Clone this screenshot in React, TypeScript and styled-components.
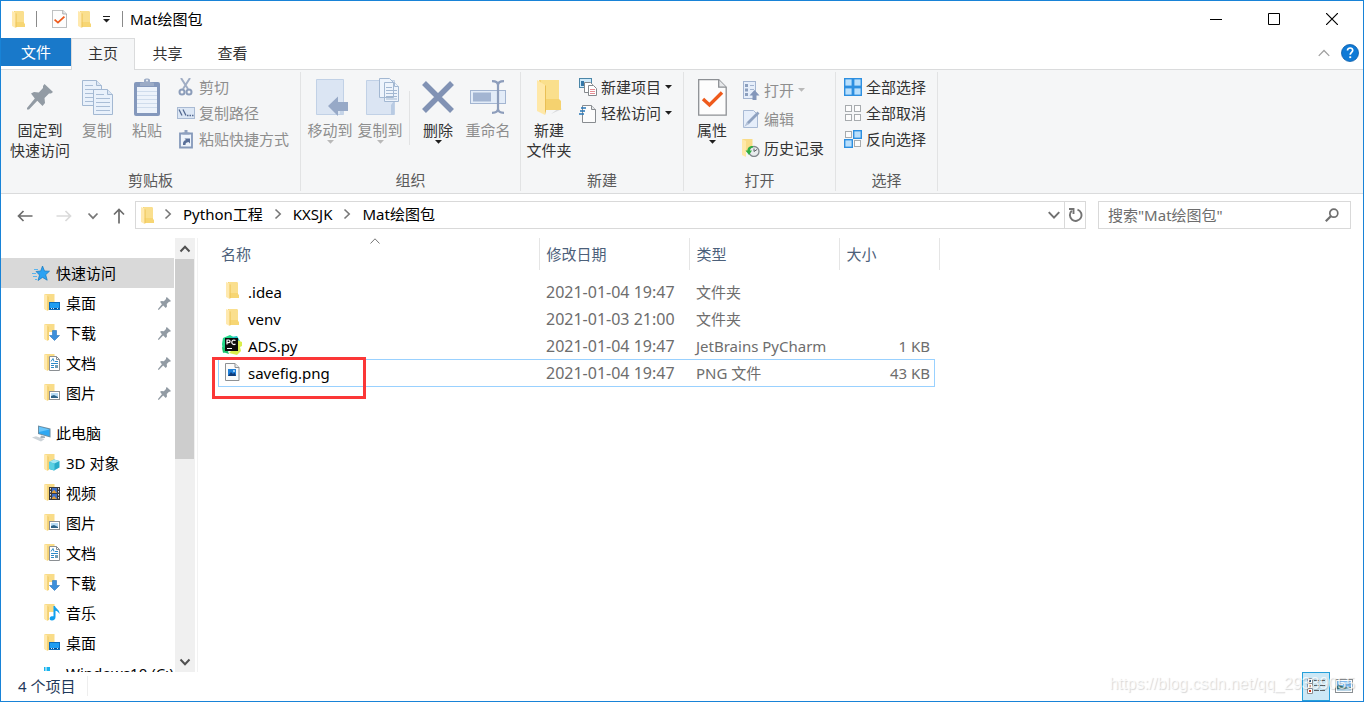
import React from 'react';
import styled, { createGlobalStyle } from 'styled-components';

const GlobalStyle = createGlobalStyle`
  * { box-sizing: border-box; }
  body {
    margin: 0;
    background: #fff;
    font-family: 'Noto Sans', 'Noto Sans CJK SC', sans-serif;
    font-size: 15px;
    line-height: 20px;
    color: #000;
  }
  button {
    font: inherit;
    color: inherit;
    background: none;
    border: 0;
    padding: 0;
    margin: 0;
    cursor: default;
  }
  svg { display: block; flex: none; }
`;

/* ---------- icons ---------- */

const FolderShape = () => (
  <>
    <path d="M2 0h8.6l1.4 1v11l1 1v3H3z" fill="#f7d674" />
    <path d="M3 0h7.6l1.4 1v10H3z" fill="#fadf8e" />
    <path d="M0 0l3.6 1.6V17L0 15z" fill="#ffe9ae" />
    <path d="M3.6 1.6V17l1-1V3z" fill="#eec65c" />
  </>
);

const FolderIcon = () => (
  <svg width="13" height="17" viewBox="0 0 13 17"><FolderShape /></svg>
);

type NavKind = 'desktop' | 'download' | 'document' | 'picture' | 'cube' | 'video' | 'music';

const overlays: Record<NavKind, React.ReactNode> = {
  desktop: (
    <>
      <rect x="5.5" y="8.5" width="10" height="7" fill="#1e9df1" stroke="#0a6cbc" />
      <path d="M6 14.5h9" stroke="#0b4f8c" />
      <path d="M7 14.5h1M9 14.5h1M13 14.5h1" stroke="#cbe9ff" />
    </>
  ),
  download: (
    <path d="M8.5 6.5h4v5h3L10.500 16.500 5.500 11.500h3z" fill="#3c8fdb" stroke="#2a73bb" strokeWidth=".6" />
  ),
  document: (
    <>
      <path d="M5.500 2.500h7l3 3v11h-10z" fill="#fff" stroke="#8b8f93" />
      <path d="M12.500 2.500v3h3" fill="none" stroke="#8b8f93" />
      <path d="M7 7.500l2-3 1 3M7 9.500h7M7 11.500h3M7 13.500h3M11 7.500h3" stroke="#2c8ac9" fill="none" />
      <rect x="11" y="11" width="3" height="3" fill="#6f9db5" />
    </>
  ),
  picture: (
    <>
      <rect x="5.500" y="7.500" width="10" height="8" fill="#fff" stroke="#8b8f93" />
      <rect x="7" y="9" width="7" height="5" fill="#b6daf4" />
      <path d="M7 14v-2l3-1 4 2v1z" fill="#2c6186" />
    </>
  ),
  cube: (
    <>
      <path d="M5 8l5-2.500L15.500 7v6.500L10 16.500 5 15z" fill="#29abc9" />
      <path d="M5 8l5-2.500L15.500 7 10.500 9.500z" fill="#a5e8f3" />
      <path d="M5 8l5.500 1.500v7L5 15z" fill="#5bd0e2" />
    </>
  ),
  video: (
    <>
      <rect x="5" y="3" width="11" height="13" fill="#3a3a3d" />
      <path d="M6.500 4v12M14.500 4v12" stroke="#e4e4e4" strokeDasharray="1.500 1.500" />
      <rect x="8" y="4" width="5" height="5" fill="#3f6fc6" />
      <rect x="8" y="10" width="5" height="5" fill="#3f6fc6" />
      <path d="M8 8l2-2 3 3H8zM8 14l2-2 3 3H8z" fill="#e2a03b" />
    </>
  ),
  music: (
    <path d="M9.500 2h1.500c.5 2.500 5 4 4.500 8-1-2-2.500-3-4-3.200V13c0 2-1.500 3.500-3.500 3.500S5.300 15 5.800 13.700 8 12 9.500 12.300z" fill="#12a0ee" />
  ),
};

const NavFolderIcon = ({ kind }: { kind: NavKind }) => (
  <svg width="17" height="18" viewBox="0 0 17 18">
    <path d="M1 0h9.500v8H5v8H1z" fill="#f9dc88" />
    <path d="M0 0l3.500 1.500V17L0 15z" fill="#ffe9ae" />
    <path d="M3.500 1.500V17l1-1V3z" fill="#eec65c" />
    {overlays[kind]}
  </svg>
);

const StarIcon = () => (
  <svg width="18" height="17" viewBox="0 0 18 17">
    <path d="M10.500 1l2 5 5 .2-3.800 3.500 1.500 5.500-4.700-2.800L6 15.500l1.500-5.500L4 6.500l4.700-.5z" fill="#2ba2f3" stroke="#1577bd" strokeWidth=".7" />
    <path d="M2 4.500h4M0 8.500h4M1 11.500h4M3 14.500h2" stroke="#5ab4ee" />
  </svg>
);

const ComputerIcon = () => (
  <svg width="19" height="17" viewBox="0 0 19 17">
    <path d="M6 .500l12.500 3v9L6 9z" fill="#6c8ea3" />
    <path d="M7 1.800l10.500 2.600v6.800L7 8.200z" fill="#2ea8f2" />
    <path d="M7 1.800l10.500 2.600L7 7z" fill="#6ac6fa" />
    <path d="M9 10.500l4 1v1.500l-5 .5z" fill="#a3b1ba" />
    <path d="M0 12.500l4-1.200 8.500 3L9 16.500z" fill="#ccd3d8" />
  </svg>
);

const WindowsDriveIcon = () => (
  <svg width="17" height="18" viewBox="0 0 17 18">
    <path d="M-2 3h3.500v4H-2zM2.500 3H6v4H2.500z" fill="#19b3ee" />
    <rect x="0" y="10" width="15" height="5" fill="#9aa4ab" />
  </svg>
);

const PushPin = ({ size }: { size: number }) => (
  <svg width={size} height={size} viewBox="0 0 26 26">
    <path d="M17.500 0L26 8l-2 1.500h-2L17.500 14l.5 5-2.500 3-5.200-5.200L2 25.500H0V24l7.800-9.600L4 9.500 7 8l4.800.5L16 4V2z" fill="#929ba4" />
  </svg>
);

const PropertiesIcon = ({ width, height }: { width: number; height: number }) => (
  <svg width={width} height={height} viewBox="0 0 29 37" preserveAspectRatio="none">
    <path d="M.7.700h20l7.500 7.500v28H.7z" fill="#fdfdfd" stroke="#8d9094" strokeWidth="1.300" />
    <path d="M20.700.700v7.500h7.500" fill="#e7e9eb" stroke="#8d9094" strokeWidth="1.300" />
    <path d="M5 20l6.500 6L24 13.500" fill="none" stroke="#ee5a1c" strokeWidth="3.400" />
  </svg>
);

const Sheet = ({ x, y }: { x: number; y: number }) => (
  <g transform={`translate(${x} ${y})`}>
    <path d="M.500.500h14l5 5v20H.500z" fill="#e9f1fb" stroke="#a3b8d2" />
    <path d="M14.500.500v5h5" fill="#dbe6f4" stroke="#a3b8d2" />
    <path d="M3 5.500h8M3 9.500h14M3 13.500h14M3 17.500h14M3 21.500h14" stroke="#a9bdd6" />
  </g>
);

const CopyIcon = () => (
  <svg width="31" height="37" viewBox="0 0 31 37"><Sheet x={0} y={1} /><Sheet x={11} y={10} /></svg>
);

const PasteIcon = () => (
  <svg width="27" height="38" viewBox="0 0 27 38">
    <rect x="0" y="4" width="26" height="34" rx="2" fill="#8498bc" />
    <path d="M3 9h20v26H3z" fill="#edf3fb" />
    <path d="M3 13.500h20M3 17.500h20M3 21.500h20M3 25.500h20M3 29.500h20" stroke="#cfdcec" />
    <path d="M6 8V5l4-1V2c0-2 6-2 6 0v2l4 1v3z" fill="#9babc6" />
    <circle cx="13" cy="2.500" r="1" fill="#eef2f8" />
  </svg>
);

const CutIcon = () => (
  <svg width="16" height="18" viewBox="0 0 16 18">
    <path d="M3 0l7 11M12 0L5 11" stroke="#a0adc4" strokeWidth="2" fill="none" />
    <circle cx="4" cy="14" r="2.500" fill="none" stroke="#8c9dba" strokeWidth="2" />
    <circle cx="11" cy="14" r="2.500" fill="none" stroke="#8c9dba" strokeWidth="2" />
  </svg>
);

const CopyPathIcon = () => (
  <svg width="18" height="12" viewBox="0 0 18 12">
    <rect x=".500" y=".500" width="17" height="11" fill="#dce7f5" stroke="#a9bad3" />
    <path d="M2 2.500l3 6M6 2.500l3 6M10 8.500h1.500M12.500 8.500H14M15 8.500h1.500" stroke="#536991" strokeWidth="1.300" />
  </svg>
);

const PasteShortcutIcon = () => (
  <svg width="15" height="19" viewBox="0 0 15 19">
    <path d="M1 3.500h12v14H1z" fill="#eef4fb" stroke="#8599ba" strokeWidth="1.800" />
    <path d="M3.500 4.500V2.500h2V0h3v2.500h2v2z" fill="#8fa1bf" />
    <path d="M4 15c0-3.500.8-4.500 3-5L5.500 8.500h5.500v5l-1.500-1.500C7 12.500 6.500 13 6.500 15z" fill="#5a7099" />
  </svg>
);

const MoveToIcon = () => (
  <svg width="38" height="38" viewBox="-5 0 38 38">
    <path d="M.500 1.500h27v35H.500z" fill="#dbe5f3" stroke="#c1d1e6" />
    <path d="M24 24h4v12h-4z" fill="#c5d4e8" />
    <path d="M12 28l10-9.500V24h10v9H22v5z" fill="#97a9c7" />
  </svg>
);

const CopyToIcon = () => (
  <svg width="40" height="38" viewBox="-6 0 40 38">
    <path d="M.500 2.500h28v34H.500z" fill="#dbe5f3" stroke="#c1d1e6" />
    <path d="M25 27l3-4v14h-3z" fill="#b9cbe3" />
    <g strokeWidth="1" stroke="#a3b8d2" fill="#eef4fc">
      <path d="M13.500.500h10l4 4v15h-14zM18.500 4.500h10l4 4v15h-14z" />
      <path d="M28.500 4.500v4h4M20 9.500h6M20 12.500h11M20 15.500h11M20 18.500h11M20 21h11" />
    </g>
  </svg>
);

const DeleteIcon = () => (
  <svg width="32" height="32" viewBox="0 0 32 32">
    <path d="M2 2l28 28M30 2L2 30" stroke="#8192b4" strokeWidth="5.500" />
  </svg>
);

const RenameIcon = () => (
  <svg width="36" height="34" viewBox="0 0 36 34">
    <rect x=".500" y="10.500" width="35" height="13" fill="#e3ecf8" stroke="#a3b5d1" />
    <rect x="3" y="12.500" width="18" height="9" fill="#a3b5d2" />
    <path d="M22 1.200c4 0 6 1.500 6 4v23.600c0 2.500-2 4-6 4M34 1.200c-4 0-6 1.500-6 4v23.600c0 2.500 2 4 6 4" fill="none" stroke="#8d9dbb" strokeWidth="2.200" />
  </svg>
);

const NewFolderIcon = () => (
  <svg width="25" height="35" viewBox="0 0 25 35">
    <path d="M14 34l11-5-3-1z" fill="#d9dadc" />
    <path d="M2 0h20v19l2 2v9H4z" fill="#f5d26f" />
    <path d="M4 0h18v19H4z" fill="#fadf8c" />
    <path d="M0 0l8 5v30l-8-4z" fill="#ffe8a8" />
    <path d="M8 5v30l1-4V6z" fill="#e9bf55" />
  </svg>
);

const NewItemIcon = () => (
  <svg width="18" height="18" viewBox="0 0 18 18">
    <rect x=".500" y=".500" width="12" height="9" fill="#cfeafa" stroke="#4b86a8" />
    <path d="M2 8V3h3v5z" fill="#3478a8" />
    <path d="M5.500 4.500h6l2 2v8h-8z" fill="#fff" stroke="#85898d" />
    <path d="M9.500 7.500h5l3 3v7h-8z" fill="#fff" stroke="#85898d" />
    <path d="M11 11.500h5M11 13.500h5M11 15.500h5" stroke="#e58d93" />
  </svg>
);

const EasyAccessIcon = () => (
  <svg width="18" height="19" viewBox="0 0 18 19">
    <path d="M3.500 1.500h9l4 4v13h-13z" fill="#fcfcfc" stroke="#888c90" />
    <path d="M12.500 1.500v4h4" fill="#e5e7e9" stroke="#888c90" />
    <path d="M2 4h5M1 7h5M0 10h5" stroke="#2777b8" strokeWidth="1.400" />
  </svg>
);

const OpenIcon = () => (
  <svg width="17" height="19" viewBox="0 0 17 19">
    <rect x=".500" y=".500" width="12" height="17" fill="#e6eefa" stroke="#a3b4d0" />
    <path d="M2 3h3v3H2zM2 7.500h3v3H2zM2 12h3v3H2z" fill="#8c9fbe" />
    <path d="M7 4.500h4M7 8.500h4" stroke="#a3b4d0" />
    <path d="M11.500 9l5 5.500h-3V19h-4v-4.500h-3z" fill="#8396ba" />
  </svg>
);

const EditIcon = () => (
  <svg width="17" height="18" viewBox="0 0 17 18">
    <path d="M.500.500h10l4 4v13H.500z" fill="#e6eefa" stroke="#a9bad4" />
    <path d="M3 15l1-3L14.500 1.500l2 2L6 14z" fill="#8fa2c0" />
    <path d="M1 17l5-3-2-2z" fill="#b6c4da" />
  </svg>
);

const HistoryIcon = () => (
  <svg width="18" height="18" viewBox="0 0 18 18">
    <path d="M0 0h10.500v13H3z" fill="#f9dc88" />
    <path d="M0 0l4 2v16l-4-2z" fill="#ffe8a8" />
    <circle cx="12" cy="12.500" r="5" fill="#e9ecee" stroke="#82888d" strokeWidth="1.300" />
    <path d="M12 9.500v3l3-2" stroke="#5b6166" fill="none" />
    <path d="M11 7C7 7 5.500 9 5.500 11.500H3.500L7 16l3-4.500H8C8 9.500 9 8.500 11 8.500z" fill="#2fae43" />
  </svg>
);

const SelectionIcon = ({ picked }: { picked: boolean[] }) => (
  <svg width="18" height="18" viewBox="0 0 18 18">
    {picked.map((on, i) => {
      const x = (i % 2) * 9;
      const y = Math.floor(i / 2) * 9;
      return on
        ? <rect key={i} x={x + 0.7} y={y + 0.7} width="7.600" height="7.600" fill="#b9dffc" stroke="#2d8fe0" strokeWidth="1.400" />
        : <rect key={i} x={x + 1.5} y={y + 1.5} width="6" height="6" fill="#fcfcfc" stroke="#a7abae" />;
    })}
  </svg>
);

const ArrowIcon = ({ dir, color }: { dir: 'left' | 'right' | 'up'; color: string }) => {
  const turn = { left: 0, right: 180, up: 90 }[dir];
  return (
    <svg width="16" height="16" viewBox="0 0 16 16">
      <path d="M6.500 3L1.500 8l5 5M1.500 8H15.500" transform={`rotate(${turn} 8 8)`} fill="none" stroke={color} strokeWidth="1.700" />
    </svg>
  );
};

type ChevronProps = { dir: 'up' | 'down' | 'right'; w: number; color: string; weight: number };
const Chevron = ({ dir, w, color, weight }: ChevronProps) => {
  const turn = { down: 0, up: 180, right: -90 }[dir];
  return (
    <svg width={w} height={w} viewBox="0 0 12 12">
      <path d="M1.500 3.500L6 8.200l4.500-4.700" transform={`rotate(${turn} 6 6)`} fill="none" stroke={color} strokeWidth={weight} />
    </svg>
  );
};

const RefreshIcon = () => (
  <svg width="15" height="16" viewBox="0 0 15 16">
    <path d="M9.500 2.600A5.800 5.800 0 1 1 3.800 3.800" fill="none" stroke="#737373" strokeWidth="1.900" />
    <path d="M1 2h4.500v5" fill="none" stroke="#737373" strokeWidth="1.900" />
  </svg>
);

const SearchIcon = () => (
  <svg width="14" height="14" viewBox="0 0 14 14">
    <circle cx="8.800" cy="5.200" r="4" fill="none" stroke="#6f6f6f" strokeWidth="1.700" />
    <path d="M6 8L.800 13.200" stroke="#6f6f6f" strokeWidth="2.200" />
  </svg>
);

const PyCharmIcon = () => (
  <svg width="20" height="20" viewBox="0 0 20 20">
    <path d="M1 3l7-3 5 3-3 12-9 3-1-9z" fill="#21d789" />
    <path d="M9 2l6-1 3 5-3 3z" fill="#1fc8c4" />
    <path d="M15 5l5 2v4l-2 1 1 4-4 4-8-2 4-4z" fill="#d9ee4b" />
    <path d="M0 12l5 2 2 5-6-2z" fill="#1bc06c" />
    <rect x="3" y="3" width="13" height="13" fill="#0b0b0b" />
    <path d="M5 9.500V5h1.800c1.700 0 1.700 2.600 0 2.600H5M13.500 5.600c-1.800-1.200-3.700-.2-3.700 1.700s2 2.900 3.700 1.700M5 13.500h5" fill="none" stroke="#fff" strokeWidth="1.200" />
  </svg>
);

const ImageFileIcon = () => (
  <svg width="15" height="18" viewBox="0 0 15 18">
    <path d="M.500.500h9.500l4 4v13H.500z" fill="#fbfbfb" stroke="#8e9194" />
    <path d="M10 .500v4h4" fill="#e8e8e8" stroke="#8e9194" />
    <rect x="3" y="6" width="8" height="7" fill="#1f7fd8" />
    <path d="M3 13l3-4 2 2 1.500-1.500L11 13z" fill="#123c78" />
    <circle cx="9" cy="8" r="1" fill="#bfe3ff" />
  </svg>
);

const HelpIcon = () => (
  <svg width="18" height="18" viewBox="0 0 18 18">
    <circle cx="9" cy="9" r="8.500" fill="#0f7ad6" stroke="#0a5ca8" strokeWidth=".8" />
    <path d="M6.500 6.500c0-3.500 5.500-3.200 5.200 0-.2 1.800-2.500 2-2.500 4.200" fill="none" stroke="#fff" strokeWidth="1.700" />
    <path d="M8.300 12.300h1.900v1.800H8.300z" fill="#fff" />
  </svg>
);

const DetailsViewIcon = () => (
  <svg width="18" height="17" viewBox="0 0 18 17">
    <path d="M.500.500h5v5h-5zM.500 5.500h5v5h-5zM.500 10.500h5v5h-5z" fill="#fff" stroke="#8a8f93" />
    <path d="M2 3h2" stroke="#2c6186" strokeWidth="2" />
    <path d="M2 8h2" stroke="#dfa58b" strokeWidth="2" />
    <path d="M2 13h2" stroke="#c9331b" strokeWidth="2" />
    <path d="M7 2.500h5M13 2.500h5M7 7.500h5M13 7.500h5M7 12.500h5M13 12.500h5" stroke="#5d6265" />
  </svg>
);

const ThumbViewIcon = () => (
  <svg width="18" height="14" viewBox="0 0 18 14">
    <rect x=".500" y=".500" width="17" height="13" fill="#fff" stroke="#8a8f93" />
    <rect x="2" y="2" width="14" height="10" fill="#7db9ee" />
    <path d="M2 7c3-1 5 0 8 1.500L16 8v1l-8 1.500H2z" fill="#3a6f6c" />
    <path d="M2 10.500L16 9v3H2z" fill="#b9d6e8" />
    <path d="M6 4h6M4 5.500h4" stroke="#fff" />
  </svg>
);

const Caret = ({ color }: { color: string }) => (
  <svg width="7" height="4" viewBox="0 0 7 4"><path d="M0 0h7L3.500 3.800z" fill={color} /></svg>
);

/* ---------- window frame ---------- */

const Window = styled.div`
  display: flex;
  flex-direction: column;
  height: 100vh;
  border: 1px solid #1883d7;
  background: #fff;
  overflow: hidden;
`;

const TitleBar = styled.header`
  display: flex;
  align-items: center;
  justify-content: space-between;
  height: 37px;
  padding: 0 2px 1px 11px;
`;

const QuickTools = styled.div`
  display: flex;
  align-items: center;
  gap: 11px;
`;

const ToolDivider = styled.span<{ $after?: number }>`
  width: 1px;
  height: 16px;
  margin-right: ${p => p.$after ?? 0}px;
  background: #8a8a8a;
`;

const Title = styled.h1`
  margin: 0 0 0 -4px;
  padding-bottom: 1px;
  font-size: 15px;
  font-weight: 400;
  line-height: 20px;
`;

const WindowControls = styled.div`
  display: flex;
  height: 100%;
`;

const ControlButton = styled.button`
  display: grid;
  place-items: center;
  width: 58px;
`;

const TabStrip = styled.nav`
  display: flex;
  flex: none;
  height: 32px;
  border-bottom: 1px solid #dadbdc;
`;

const FileTab = styled.button`
  width: 70px;
  height: 28px;
  background: #1979ca;
  color: #fff;
`;

const Tab = styled.button<{ $active?: boolean }>`
  width: ${p => (p.$active ? 64 : 65)}px;
  height: 32px;
  padding-bottom: 4px;
  color: #333;
  border: 1px solid ${p => (p.$active ? '#dadbdc' : 'transparent')};
  border-bottom: 0;
  background: ${p => (p.$active ? '#f5f6f7' : 'transparent')};
`;

const TabTools = styled.div`
  display: flex;
  align-items: center;
  gap: 10px;
  margin-left: auto;
  padding: 0 4px 2px 0;
`;

/* ---------- ribbon ---------- */

const Ribbon = styled.div`
  display: flex;
  flex: none;
  height: 124px;
  padding: 2px 0;
  background: #f5f6f7;
  border-bottom: 1px solid #dadbdc;
`;

const Group = styled.section<{ $width: number }>`
  display: flex;
  flex-direction: column;
  flex: none;
  justify-content: space-between;
  width: ${p => p.$width}px;
  padding: 4px 0 1px;
  border-right: 1px solid #e2e3e4;
`;

const GroupItems = styled.div`
  display: flex;
  padding-left: 4px;
`;

const GroupLabel = styled.h2`
  margin: 0;
  font-size: 15px;
  font-weight: 400;
  line-height: 20px;
  text-align: center;
  color: #5a5a5a;
`;

const LargeButton = styled.button<{ $width: number; $off?: boolean }>`
  display: flex;
  flex-direction: column;
  align-items: center;
  width: ${p => p.$width}px;
  white-space: nowrap;
  color: ${p => (p.$off ? '#8e8e8e' : '#333')};
`;

const LargeIcon = styled.span`
  display: grid;
  place-items: center;
  height: 42px;
  margin-bottom: 2px;
`;

const ItemDivider = styled.span`
  width: 1px;
  height: 54px;
  margin: 15px 3px 0 4px;
  background: #e2e3e4;
`;

const SmallList = styled.div<{ $gap: number; $left: number; $top?: number }>`
  display: flex;
  flex-direction: column;
  gap: ${p => p.$gap}px;
  margin-left: ${p => p.$left}px;
  padding-top: ${p => p.$top ?? 1}px;
`;

const SmallButton = styled.button<{ $off?: boolean }>`
  display: flex;
  align-items: center;
  gap: 4px;
  height: 20px;
  white-space: nowrap;
  color: ${p => (p.$off ? '#8e8e8e' : '#333')};
`;

const SmallIcon = styled.span`
  display: grid;
  place-items: center;
  width: 18px;
`;

type LargeProps = { icon: React.ReactNode; lines: string[]; width: number; off?: boolean; menu?: boolean };
const Large = ({ icon, lines, width, off, menu }: LargeProps) => (
  <LargeButton type="button" $width={width} $off={off}>
    <LargeIcon>{icon}</LargeIcon>
    {lines.map(line => <span key={line}>{line}</span>)}
    {menu && <Caret color={off ? '#b9b9b9' : '#1e1e1e'} />}
  </LargeButton>
);

type SmallProps = { icon: React.ReactNode; label: string; off?: boolean; menu?: boolean };
const Small = ({ icon, label, off, menu }: SmallProps) => (
  <SmallButton type="button" $off={off}>
    <SmallIcon>{icon}</SmallIcon>
    <span>{label}</span>
    {menu && <Caret color={off ? '#b9b9b9' : '#1e1e1e'} />}
  </SmallButton>
);

/* ---------- address row ---------- */

const AddressRow = styled.div`
  display: flex;
  align-items: center;
  flex: none;
  height: 44px;
  padding: 0 12px 2px 16px;
`;

const NavButton = styled.button<{ $after: number }>`
  display: grid;
  place-items: center;
  height: 28px;
  margin-right: ${p => p.$after}px;
  padding-top: 2px;
`;

const AddressBox = styled.div`
  display: flex;
  flex: 1;
  align-items: center;
  height: 28px;
  margin-right: 12px;
  padding-left: 5px;
  border: 1px solid #d9d9d9;
`;

const Crumbs = styled.div`
  display: flex;
  flex: 1;
  align-items: center;
  gap: 9px;
  margin-left: 8px;
  padding-bottom: 2px;
`;

const BoxButton = styled.button<{ $divided?: boolean }>`
  display: grid;
  place-items: center;
  width: 21px;
  height: 100%;
  border-left: ${p => (p.$divided ? '1px solid #d9d9d9' : '0')};
`;

const SearchBox = styled.label`
  display: flex;
  align-items: center;
  width: 253px;
  height: 28px;
  padding: 0 11px 0 9px;
  border: 1px solid #d9d9d9;
`;

const SearchInput = styled.input`
  flex: 1;
  min-width: 0;
  padding: 0;
  border: 0;
  outline: 0;
  font: inherit;
  background: none;
  &::placeholder { color: #6d6d6d; opacity: 1; }
`;

/* ---------- body ---------- */

const Body = styled.div`
  display: flex;
  flex: 1;
  min-height: 0;
`;

const Tree = styled.nav`
  flex: none;
  width: 174px;
  padding-top: 20px;
  overflow: hidden;
`;

const TreeItem = styled.a<{ $root?: boolean; $selected?: boolean; $spaced?: boolean }>`
  display: flex;
  align-items: center;
  gap: ${p => (p.$root ? 5 : 4)}px;
  width: 173px;
  height: 30px;
  margin-top: ${p => (p.$spaced ? 10 : 0)}px;
  padding: 0 3px 0 ${p => (p.$root ? 31 : 43)}px;
  color: #000;
  text-decoration: none;
  white-space: nowrap;
  background: ${p => (p.$selected ? '#d9d9d9' : 'transparent')};
`;

const TreeIcon = styled.span<{ $width: number }>`
  width: ${p => p.$width}px;
  flex: none;
`;

const TreeLabel = styled.span`
  flex: 1;
`;

const ScrollTrack = styled.div`
  display: flex;
  flex-direction: column;
  flex: none;
  width: 20px;
  background: #f0f0f0;
`;

const ScrollButton = styled.button`
  display: grid;
  place-items: center;
  height: 21px;
  padding-right: 1px;
`;

const ScrollSpace = styled.div`
  flex: 1;
`;

const ScrollThumb = styled.div`
  width: 19px;
  height: 51%;
  background: #cdcdcd;
`;

const Content = styled.main`
  flex: 1;
  min-width: 0;
  margin-left: 2px;
  padding-left: 14px;
  border-left: 1px solid #f2f2f2;
`;

const FileTable = styled.table`
  width: 727px;
  table-layout: fixed;
  border-collapse: collapse;
`;

const HeadCell = styled.th<{ $width: number; $left: number }>`
  position: relative;
  width: ${p => p.$width}px;
  height: 32px;
  padding: 0 0 1px ${p => p.$left}px;
  border-right: 1px solid #e5e5e5;
  font-weight: 400;
  text-align: left;
  color: #4c607a;
`;

const SortMark = styled.span`
  position: absolute;
  top: -3px;
  left: 50%;
  margin-left: -6px;
`;

const GapRow = styled.tr`
  height: 8px;
`;

const FileRow = styled.tr<{ $focused?: boolean }>`
  position: relative;
  height: 27px;
  &::after {
    content: '';
    display: ${p => (p.$focused ? 'block' : 'none')};
    position: absolute;
    inset: 0 4px -1px 6px;
    border: 1px solid #99d1ff;
    pointer-events: none;
  }
`;

const Cell = styled.td<{ $align?: string; $large?: boolean }>`
  padding: 0 ${p => (p.$align ? 9 : 0)}px 0 7px;
  font-size: ${p => (p.$large ? 16 : 15)}px;
  text-align: ${p => p.$align ?? 'left'};
  white-space: nowrap;
  color: #6d6d6d;
`;

const NameCell = styled.td`
  position: relative;
  padding: 0 0 0 10px;
`;

const NameLine = styled.div`
  display: flex;
  align-items: center;
  gap: 6px;
`;

const FileIcon = styled.span`
  display: grid;
  place-items: center;
  width: 20px;
  height: 24px;
  padding-bottom: 2px;
`;

const Highlight = styled.span`
  position: absolute;
  z-index: 1;
  top: -2px;
  left: 0;
  width: 154px;
  height: 42px;
  border: 3px solid #fb3737;
`;

/* ---------- status bar ---------- */

const StatusBar = styled.footer`
  position: relative;
  display: flex;
  align-items: center;
  flex: none;
  height: 29px;
  padding: 0 10px 0 17px;
  color: #1e395b;
`;

const StatusText = styled.span`
  margin-bottom: 2px;
  padding-right: 12px;
  border-right: 1px solid #eee;
`;

const ViewSwitch = styled.div`
  display: flex;
  margin-left: auto;
  height: 100%;
`;

const ViewButton = styled.button<{ $active?: boolean }>`
  display: grid;
  place-items: center;
  width: ${p => (p.$active ? 28 : 18)}px;
  margin-right: ${p => (p.$active ? 5 : 0)}px;
  padding-bottom: ${p => (p.$active ? 0 : 2)}px;
  border: ${p => (p.$active ? '1px solid #26a0da' : '0')};
  background: ${p => (p.$active ? '#cce8f6' : 'transparent')};
`;

const Watermark = styled.span`
  position: absolute;
  right: 8px;
  top: 2px;
  font-family: 'Liberation Sans', sans-serif;
  font-size: 16px;
  color: rgba(255, 255, 255, 0.75);
  text-shadow: 1px 1px 1px rgba(0, 0, 0, 0.16);
  pointer-events: none;
`;

/* ---------- data ---------- */

const pinned: [NavKind, string][] = [
  ['desktop', '桌面'], ['download', '下载'], ['document', '文档'], ['picture', '图片'],
];

const computer: [NavKind, string][] = [
  ['cube', '3D 对象'], ['video', '视频'], ['picture', '图片'], ['document', '文档'],
  ['download', '下载'], ['music', '音乐'], ['desktop', '桌面'],
];

const files = [
  { icon: <FolderIcon />, name: '.idea', date: '2021-01-04 19:47', type: '文件夹', size: '' },
  { icon: <FolderIcon />, name: 'venv', date: '2021-01-03 21:00', type: '文件夹', size: '' },
  { icon: <PyCharmIcon />, name: 'ADS.py', date: '2021-01-04 19:47', type: 'JetBrains PyCharm', size: '1 KB' },
  { icon: <ImageFileIcon />, name: 'savefig.png', date: '2021-01-04 19:47', type: 'PNG 文件', size: '43 KB', focused: true },
];

export default function App() {
  return (
    <>
      <GlobalStyle />
      <Window>
        <TitleBar>
          <QuickTools>
            <FolderIcon />
            <ToolDivider $after={4} />
            <PropertiesIcon width={15} height={18} />
            <FolderIcon />
            <svg width="9" height="8" viewBox="0 0 9 8">
              <path d="M1 1.500h7" stroke="#1e1e1e" />
              <path d="M1 4h7L4.500 7.500z" fill="#1e1e1e" />
            </svg>
            <ToolDivider />
            <Title>Mat绘图包</Title>
          </QuickTools>
          <WindowControls>
            <ControlButton type="button" aria-label="最小化">
              <svg width="12" height="12" viewBox="0 0 12 12"><path d="M0 6.500h12" stroke="#000" /></svg>
            </ControlButton>
            <ControlButton type="button" aria-label="最大化">
              <svg width="12" height="12" viewBox="0 0 12 12"><path d="M.500.500h11v11H.500z" fill="none" stroke="#000" /></svg>
            </ControlButton>
            <ControlButton type="button" aria-label="关闭">
              <svg width="12" height="12" viewBox="0 0 12 12"><path d="M0 0l12 12M12 0L0 12" stroke="#000" strokeWidth="1.200" /></svg>
            </ControlButton>
          </WindowControls>
        </TitleBar>

        <TabStrip>
          <FileTab type="button">文件</FileTab>
          <Tab type="button" $active>主页</Tab>
          <Tab type="button">共享</Tab>
          <Tab type="button">查看</Tab>
          <TabTools>
            <button type="button" aria-label="折叠功能区"><Chevron dir="up" w={14} color="#a0a0a0" weight={1.1} /></button>
            <button type="button" aria-label="帮助"><HelpIcon /></button>
          </TabTools>
        </TabStrip>

        <Ribbon>
          <Group $width={300}>
            <GroupItems>
              <Large icon={<PushPin size={26} />} lines={['固定到', '快速访问']} width={70} />
              <Large icon={<CopyIcon />} lines={['复制']} width={44} off />
              <Large icon={<PasteIcon />} lines={['粘贴']} width={56} off />
              <SmallList $gap={6} $left={2}>
                <Small icon={<CutIcon />} label="剪切" off />
                <Small icon={<CopyPathIcon />} label="复制路径" off />
                <Small icon={<PasteShortcutIcon />} label="粘贴快捷方式" off />
              </SmallList>
            </GroupItems>
            <GroupLabel>剪贴板</GroupLabel>
          </Group>
          <Group $width={220}>
            <GroupItems>
              <Large icon={<MoveToIcon />} lines={['移动到']} width={50} off menu />
              <Large icon={<CopyToIcon />} lines={['复制到']} width={50} off menu />
              <ItemDivider />
              <Large icon={<DeleteIcon />} lines={['删除']} width={50} menu />
              <Large icon={<RenameIcon />} lines={['重命名']} width={50} off />
            </GroupItems>
            <GroupLabel>组织</GroupLabel>
          </Group>
          <Group $width={163}>
            <GroupItems>
              <Large icon={<NewFolderIcon />} lines={['新建', '文件夹']} width={48} />
              <SmallList $gap={6} $left={6}>
                <Small icon={<NewItemIcon />} label="新建项目" menu />
                <Small icon={<EasyAccessIcon />} label="轻松访问" menu />
              </SmallList>
            </GroupItems>
            <GroupLabel>新建</GroupLabel>
          </Group>
          <Group $width={152}>
            <GroupItems>
              <Large icon={<PropertiesIcon width={29} height={37} />} lines={['属性']} width={48} menu />
              <SmallList $gap={9} $left={6} $top={4}>
                <Small icon={<OpenIcon />} label="打开" off menu />
                <Small icon={<EditIcon />} label="编辑" off />
                <Small icon={<HistoryIcon />} label="历史记录" />
              </SmallList>
            </GroupItems>
            <GroupLabel>打开</GroupLabel>
          </Group>
          <Group $width={102}>
            <GroupItems>
              <SmallList $gap={6} $left={4}>
                <Small icon={<SelectionIcon picked={[true, true, true, true]} />} label="全部选择" />
                <Small icon={<SelectionIcon picked={[false, false, false, false]} />} label="全部取消" />
                <Small icon={<SelectionIcon picked={[false, true, true, false]} />} label="反向选择" />
              </SmallList>
            </GroupItems>
            <GroupLabel>选择</GroupLabel>
          </Group>
        </Ribbon>

        <AddressRow>
          <NavButton type="button" aria-label="后退" $after={23}><ArrowIcon dir="left" color="#6c6c6c" /></NavButton>
          <NavButton type="button" aria-label="前进" $after={15}><ArrowIcon dir="right" color="#dadada" /></NavButton>
          <NavButton type="button" aria-label="最近位置" $after={12}><Chevron dir="down" w={12} color="#777" weight={1.7} /></NavButton>
          <NavButton type="button" aria-label="上移" $after={8}><ArrowIcon dir="up" color="#6c6c6c" /></NavButton>
          <AddressBox>
            <FolderIcon />
            <Crumbs>
              <Chevron dir="right" w={12} color="#777" weight={1.6} />
              <span>Python工程</span>
              <Chevron dir="right" w={12} color="#777" weight={1.6} />
              <span>KXSJK</span>
              <Chevron dir="right" w={12} color="#777" weight={1.6} />
              <span>Mat绘图包</span>
            </Crumbs>
            <BoxButton type="button" aria-label="历史位置"><Chevron dir="down" w={14} color="#707070" weight={1.7} /></BoxButton>
            <BoxButton type="button" aria-label="刷新" $divided><RefreshIcon /></BoxButton>
          </AddressBox>
          <SearchBox>
            <SearchInput type="text" aria-label="搜索" placeholder={'搜索"Mat绘图包"'} />
            <SearchIcon />
          </SearchBox>
        </AddressRow>

        <Body>
          <Tree>
            <TreeItem href="#quick" $root $selected>
              <TreeIcon $width={19}><StarIcon /></TreeIcon>
              <TreeLabel>快速访问</TreeLabel>
            </TreeItem>
            {pinned.map(([kind, label]) => (
              <TreeItem href="#pinned" key={label}>
                <TreeIcon $width={18}><NavFolderIcon kind={kind} /></TreeIcon>
                <TreeLabel>{label}</TreeLabel>
                <PushPin size={13} />
              </TreeItem>
            ))}
            <TreeItem href="#computer" $root $spaced>
              <TreeIcon $width={19}><ComputerIcon /></TreeIcon>
              <TreeLabel>此电脑</TreeLabel>
            </TreeItem>
            {computer.map(([kind, label]) => (
              <TreeItem href="#folder" key={label}>
                <TreeIcon $width={18}><NavFolderIcon kind={kind} /></TreeIcon>
                <TreeLabel>{label}</TreeLabel>
              </TreeItem>
            ))}
            <TreeItem href="#drive">
              <TreeIcon $width={18}><WindowsDriveIcon /></TreeIcon>
              <TreeLabel>Windows10 (C:)</TreeLabel>
            </TreeItem>
          </Tree>
          <ScrollTrack>
            <ScrollButton type="button" aria-label="向上滚动"><Chevron dir="up" w={12} color="#505050" weight={2} /></ScrollButton>
            <ScrollSpace><ScrollThumb /></ScrollSpace>
            <ScrollButton type="button" aria-label="向下滚动"><Chevron dir="down" w={12} color="#505050" weight={2} /></ScrollButton>
          </ScrollTrack>
          <Content>
            <FileTable>
              <thead>
                <tr>
                  <HeadCell $width={327} $left={9}>
                    名称
                    <SortMark><Chevron dir="up" w={12} color="#777" weight={1} /></SortMark>
                  </HeadCell>
                  <HeadCell $width={150} $left={7}>修改日期</HeadCell>
                  <HeadCell $width={150} $left={7}>类型</HeadCell>
                  <HeadCell $width={100} $left={7}>大小</HeadCell>
                </tr>
              </thead>
              <tbody>
                <GapRow aria-hidden="true"><td colSpan={4} /></GapRow>
                {files.map(file => (
                  <FileRow key={file.name} $focused={file.focused}>
                    <NameCell>
                      <NameLine>
                        <FileIcon>{file.icon}</FileIcon>
                        <span>{file.name}</span>
                      </NameLine>
                      {file.focused && <Highlight />}
                    </NameCell>
                    <Cell $large>{file.date}</Cell>
                    <Cell>{file.type}</Cell>
                    <Cell $align="right">{file.size}</Cell>
                  </FileRow>
                ))}
              </tbody>
            </FileTable>
          </Content>
        </Body>

        <StatusBar>
          <StatusText>4 个项目</StatusText>
          <ViewSwitch>
            <ViewButton type="button" aria-label="详细信息" $active><DetailsViewIcon /></ViewButton>
            <ViewButton type="button" aria-label="大缩略图"><ThumbViewIcon /></ViewButton>
          </ViewSwitch>
          <Watermark>https://blog.csdn.net/qq_29339055</Watermark>
        </StatusBar>
      </Window>
    </>
  );
}
